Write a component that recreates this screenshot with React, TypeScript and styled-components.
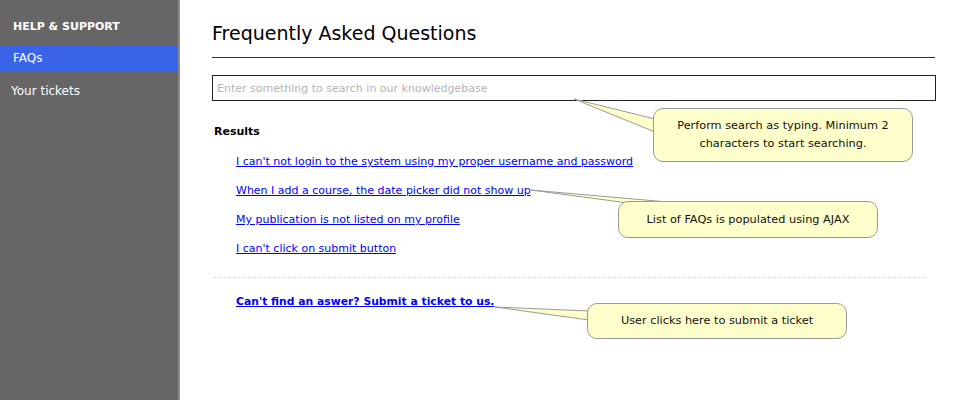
import React from "react";
import styled, { createGlobalStyle } from "styled-components";

const GlobalStyle = createGlobalStyle`
    body {
        margin: 0;
        background: #ffffff;
        font-family: "DejaVu Sans", "Liberation Sans", sans-serif;
    }
`

const Page = styled.div`
    position: relative;
    display: flex;
    width: 960px;
    height: 400px;
    overflow: hidden;
`

const Sidebar = styled.nav`
    width: 178px;
    flex-shrink: 0;
    background-color: #666666;
    border-right: 2px solid #8a8a8a;
    display: flex;
    flex-direction: column;
    padding-top: 18px;
    color: #ffffff;
`

const SideHeader = styled.div`
    font-size: 11px;
    font-weight: bold;
    padding: 0 0 0 13px;
    height: 17px;
    line-height: 17px;
    margin-bottom: 10px;
`

interface SideItemProps {
    active?: boolean;
}

const SideItem = styled.div<SideItemProps>`
    height: 27px;
    line-height: 27px;
    font-size: 12px;
    padding-left: ${(props) => props.active ? '13px' : '11px'};
    background-color: ${(props) => props.active ? '#3a64e8' : 'transparent'};
    margin-bottom: 6px;
`

const Main = styled.main`
    flex: 1;
    display: flex;
    flex-direction: column;
    padding: 19px 24px 0 32px;
    color: #000000;
`

const Title = styled.h1`
    margin: 0;
    font-size: 19px;
    font-weight: normal;
    line-height: 28px;
`

const Rule = styled.hr`
    margin: 10px 0 0 0;
    border: none;
    border-top: 1.5px solid #333333;
    width: 723px;
`

const SearchBox = styled.input`
    margin-top: 17px;
    width: 724px;
    height: 26px;
    box-sizing: border-box;
    border: 1.5px solid #222222;
    padding: 0 4px;
    font-family: inherit;
    font-size: 11px;
    outline: none;
    &::placeholder {
        color: #b4b4b4;
    }
`

const ResultsLabel = styled.div`
    margin: 23px 0 0 2px;
    font-size: 11px;
    font-weight: bold;
    line-height: 16px;
`

const LinkList = styled.div`
    display: flex;
    flex-direction: column;
    gap: 13px;
    margin-top: 14px;
    padding-left: 24px;
`

interface FaqLinkProps {
    strong?: boolean;
}

const FaqLink = styled.a<FaqLinkProps>`
    color: #0000ff;
    text-decoration: underline;
    font-size: ${(props) => props.strong ? '10.8px' : '11px'};
    line-height: 16px;
    font-weight: ${(props) => props.strong ? 'bold' : 'normal'};
    width: fit-content;
    cursor: pointer;
`

const Divider = styled.div`
    margin: 20px 10px 0 1px;
    border-top: 1.5px dashed #dcdcdc;
`

const SubmitRow = styled.div`
    margin-top: 12px;
    padding-left: 24px;
`

const Notes = styled.div`
    position: absolute;
    inset: 0;
    pointer-events: none;
`

const TailLayer = styled.svg`
    position: absolute;
    left: 0;
    top: 0;
`

interface CalloutProps {
    x: number;
    y: number;
    h: number;
}

const Callout = styled.div<CalloutProps>`
    position: absolute;
    left: ${(props) => props.x}px;
    top: ${(props) => props.y}px;
    width: 260px;
    height: ${(props) => props.h}px;
    box-sizing: border-box;
    background-color: #ffffcc;
    border: 1px solid #9a9a9a;
    border-radius: 10px;
    display: flex;
    align-items: center;
    justify-content: center;
    text-align: center;
    font-size: 11.3px;
    line-height: 18px;
    padding: 0 20px;
    color: #111111;
`

const questions = [
    "I can't not login to the system using my proper username and password",
    "When I add a course, the date picker did not show up",
    "My publication is not listed on my profile",
    "I can't click on submit button",
]

const tails = [
    "574,99 655,119 655,132",
    "531,190 628,203 668,202",
    "495,307 589,311 589,320",
]

const App: React.FC = () => {
    return (
        <React.Fragment>
            <GlobalStyle />
            <Page>
                <Sidebar>
                    <SideHeader>HELP &amp; SUPPORT</SideHeader>
                    <SideItem active>FAQs</SideItem>
                    <SideItem>Your tickets</SideItem>
                </Sidebar>
                <Main>
                    <Title>Frequently Asked Questions</Title>
                    <Rule />
                    <SearchBox placeholder="Enter something to search in our knowledgebase" />
                    <ResultsLabel>Results</ResultsLabel>
                    <LinkList>
                        {questions.map((q, index) => <FaqLink key={index}>{q}</FaqLink>)}
                    </LinkList>
                    <Divider />
                    <SubmitRow>
                        <FaqLink strong>Can't find an aswer? Submit a ticket to us.</FaqLink>
                    </SubmitRow>
                </Main>
                <Notes>
                    <TailLayer width="960" height="400">
                        {tails.map((pts, index) =>
                            <polygon key={index} points={pts} fill="#ffffcc" stroke="#9a9a9a" strokeWidth="1" />
                        )}
                    </TailLayer>
                    <Callout x={653} y={108} h={54}>Perform search as typing. Minimum 2 characters to start searching.</Callout>
                    <Callout x={618} y={201} h={37}>List of FAQs is populated using AJAX</Callout>
                    <Callout x={587} y={303} h={36}>User clicks here to submit a ticket</Callout>
                </Notes>
            </Page>
        </React.Fragment>
    )
}

export default App
